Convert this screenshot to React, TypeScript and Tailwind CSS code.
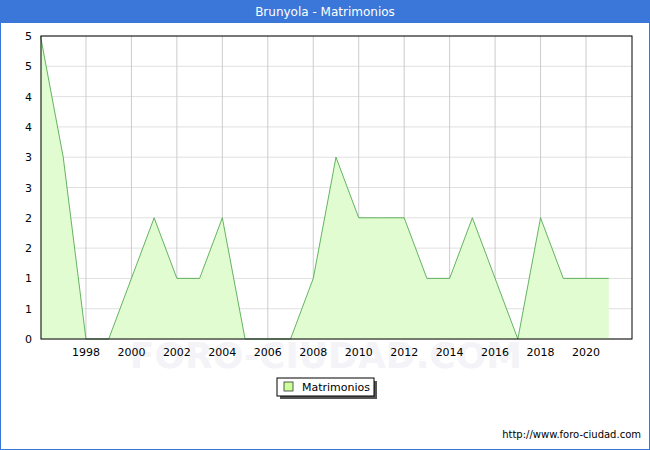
const data=[5,3,0,0,1,2,1,1,2,0,0,0,1,3,2,2,2,1,1,2,1,0,2,1,1,1];
const X=(i:number)=>39.5+i*22.73;
const Y=(v:number)=>338-v*60.6;
export default function App(){
  const pts=data.map((v,i)=>`${X(i)},${Y(v)}`).join(" ");
  const area=`${X(0)},338 ${pts} ${X(25)},338`;
  const hl=[0,1,2,3,4,5,6,7,8,9,10];
  const ylab=["0","1","1","2","2","3","3","4","4","5","5"];
  return(
  <div className="w-[650px] h-[450px] bg-white border border-[#3a77d8] flex flex-col overflow-hidden" style={{fontFamily:'"DejaVu Sans",sans-serif'}}>
    <div className="h-[22px] bg-[#3a77d8] text-white text-[12px] flex items-center justify-center">Brunyola - Matrimonios</div>
    <div className="relative flex-1">
      <svg width="648" height="450" className="absolute left-0" style={{top:-22}}>
        <text x="325" y="367" textAnchor="middle" fontSize="36" fill="#f3f3f8" fontWeight="bold">FORO-CIUDAD.COM</text>
        {hl.map(k=><line key={k} x1="40" x2="631" y1={338-k*30.3} y2={338-k*30.3} stroke="#e0e0e0"/>)}
        {Array.from({length:12},(_,k)=><line key={k} x1={X(2+2*k)} x2={X(2+2*k)} y1="35" y2="338" stroke="#cccccc"/>)}
        <polygon points={area} fill="#e0fcd0"/>
        <polyline points={pts} fill="none" stroke="#40a040" strokeWidth="0.8"/>
        <rect x="40" y="35" width="591" height="303" fill="none" stroke="#000"/>
        {hl.map(k=><text key={k} x="31" y={338-k*30.3+4} textAnchor="end" fontSize="11" fill="#000">{ylab[k]}</text>)}
        {Array.from({length:12},(_,k)=><text key={k} x={X(2+2*k)} y="355" textAnchor="middle" fontSize="11">{1998+2*k}</text>)}
        <rect x="279" y="380" width="97" height="18" fill="#555"/>
        <rect x="276" y="377" width="97" height="18" fill="#fff" stroke="#000"/>
        <rect x="283" y="381" width="9" height="9" fill="#ccff99" stroke="#333" strokeWidth="0.8"/>
        <text x="301" y="390" fontSize="11">Matrimonios</text>
        <text x="640" y="437" textAnchor="end" fontSize="10">http://www.foro-ciudad.com</text>
      </svg>
    </div>
  </div>);
}
